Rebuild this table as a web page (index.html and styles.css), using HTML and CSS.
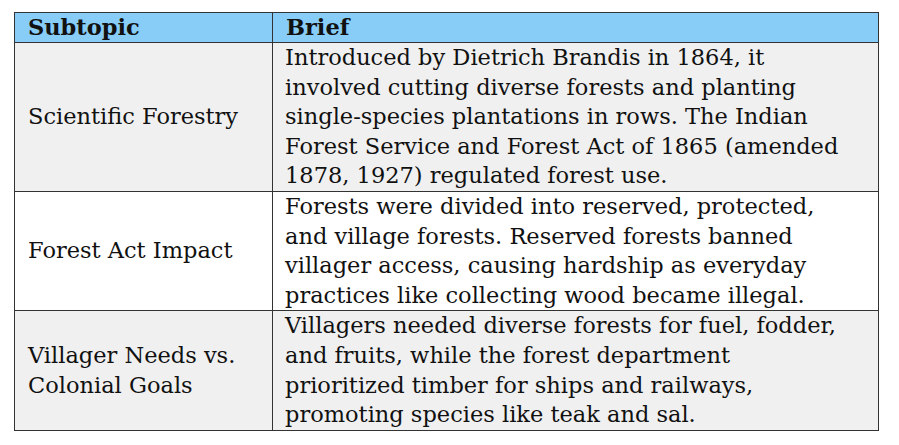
FILE: index.html
```html
<!DOCTYPE html>
<html lang="en">
<head>
<meta charset="utf-8">
<title>Scientific Forestry</title>
<link rel="stylesheet" href="styles.css">
</head>
<body>
<table class="topics">
  <colgroup>
    <col class="col-sub">
    <col class="col-brief">
  </colgroup>
  <thead>
    <tr>
      <th>Subtopic</th>
      <th>Brief</th>
    </tr>
  </thead>
  <tbody>
    <tr class="shaded">
      <td class="sub">Scientific Forestry</td>
      <td class="brief">Introduced by Dietrich Brandis in 1864, it<br>involved cutting diverse forests and planting<br>single-species plantations in rows. The Indian<br>Forest Service and Forest Act of 1865 (amended<br>1878, 1927) regulated forest use.</td>
    </tr>
    <tr>
      <td class="sub">Forest Act Impact</td>
      <td class="brief">Forests were divided into reserved, protected,<br>and village forests. Reserved forests banned<br>villager access, causing hardship as everyday<br>practices like collecting wood became illegal.</td>
    </tr>
    <tr class="shaded">
      <td class="sub">Villager Needs vs.<br>Colonial Goals</td>
      <td class="brief">Villagers needed diverse forests for fuel, fodder,<br>and fruits, while the forest department<br>prioritized timber for ships and railways,<br>promoting species like teak and sal.</td>
    </tr>
  </tbody>
</table>
</body>
</html>
```

FILE: styles.css
```css
html, body {
  margin: 0;
  padding: 0;
  background: #ffffff;
}

body {
  padding: 12px 0 0 14px;
  font-family: "DejaVu Serif", "Liberation Serif", serif;
  font-size: 22.5px;
  line-height: 29.6px;
  color: #111;
}

.topics {
  border-collapse: collapse;
  width: 864px;
  table-layout: fixed;
  border: 1px solid #555;
}

.col-sub { width: 258px; }
.col-brief { width: 606px; }

.topics th,
.topics td {
  border: 1px solid #333;
  padding: 0 8px 0 13px;
  text-align: left;
  white-space: nowrap;
}

.topics th {
  background: #87cdf8;
  font-weight: bold;
  color: #111;
  height: 29px;
  line-height: 29px;
  vertical-align: middle;
}

.topics td.brief {
  padding-left: 12px;
  vertical-align: top;
}

.topics td.sub {
  vertical-align: middle;
}

.shaded td {
  background: #f0f0f0;
}
```
